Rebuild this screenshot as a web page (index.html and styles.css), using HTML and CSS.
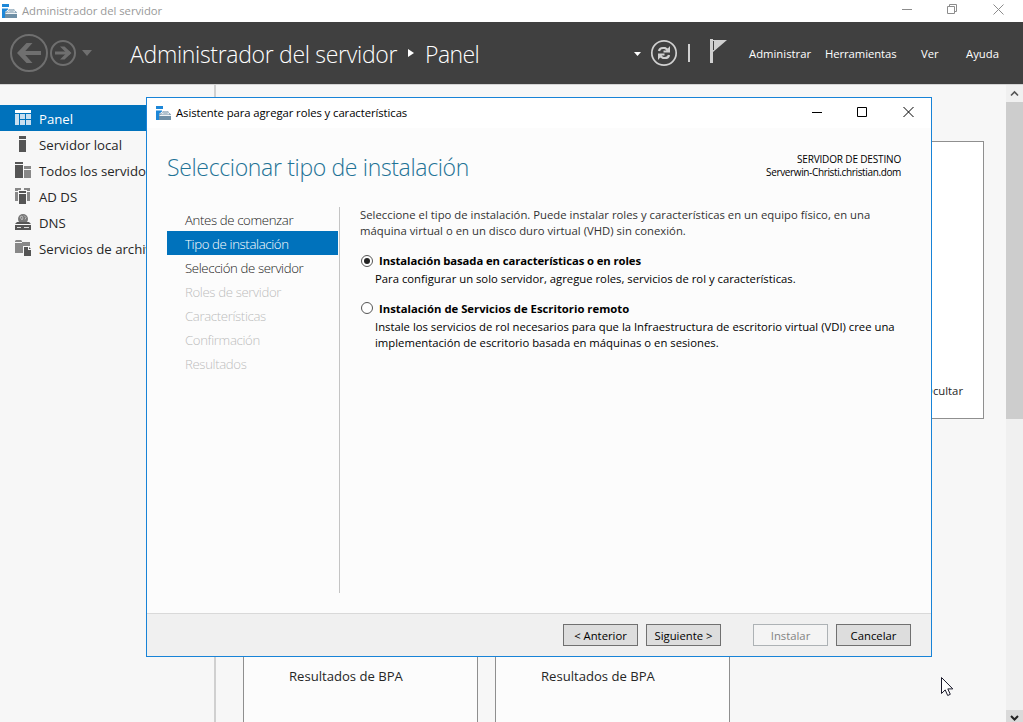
FILE: index.html
```html
<!DOCTYPE html>
<html lang="es">
<head>
<meta charset="utf-8">
<title>Administrador del servidor</title>
<link rel="stylesheet" href="styles.css">
</head>
<body>
<svg class="defs" width="0" height="0" aria-hidden="true">
  <symbol id="app" viewBox="0 0 15 15"><path fill="#1d87d8" d="M0 0h7v3H0zM0 4.500h6v1L3 8v6H0z"/><path fill="#6f8fa5" d="M2.500 9 5 7h1l1-2h5l1 2h.8L15 9v5H3V9z"/><path fill="none" stroke="#fff" stroke-width=".9" d="M6.800 8V6.700L7.600 6h3.800l.8.700V8M3.500 9.500H15M4.500 8h9"/></symbol>
</svg>
<div class="app">
  <header class="titlebar">
    <svg class="appicon" width="15" height="15"><use href="#app"/></svg>
    <span class="titletext">Administrador del servidor</span>
    <svg class="winbtns" width="110" height="20" fill="none" stroke="#8c8c8c"><path d="M1 9.500h10M46.500 6.500h7v7h-7zM48.500 6.500v-2h7v7h-2M92.500 4.500l10 10M102.500 4.500l-10 10"/></svg>
  </header>
  <div class="banner">
    <svg class="navbtns" width="86" height="42" viewBox="0 0 86 42">
      <g fill="none" stroke="#6f6f6f"><circle cx="19" cy="21" r="18" stroke-width="2"/><circle cx="53" cy="21" r="12" stroke-width="2"/>
      <path stroke-width="4" d="M31 21H9"/><path stroke-width="3" d="M60 21H45"/></g>
      <path fill="#6f6f6f" d="M7 21l9.500-10h6l-9 10 9 10h-6zM61.500 21l-7-6.500h-4.500l6.500 6.500-6.500 6.500h4.500zM72 18h10l-5 6z"/>
    </svg>
    <h1 class="crumb"><span class="crumb-a">Administrador del servidor</span><svg width="6" height="8"><path fill="#fff" d="M0 0l6 4-6 4z"/></svg><span class="crumb-b">Panel</span></h1>
    <svg class="tools" width="96" height="42" viewBox="0 0 96 42">
      <path fill="#fff" d="M1 20h7l-3.500 4z"/>
      <circle cx="31" cy="21" r="12.200" fill="none" stroke="#d0d0d0" stroke-width="1.700"/>
      <path fill="none" stroke="#d0d0d0" stroke-width="2.200" d="M26 19q.5-3 4-3h2l2.500 1.700M36 23q-.5 3-4 3h-2l-2.500-1.700"/>
      <path fill="#d0d0d0" d="M37 14v6.500h-6.500v-2h2.500zM25 28v-6.500h6.500v2H29zM55 12h2v18h-2zM77 7h3v24h-3zM80 8h14L80 20z"/><path stroke="#404040" d="M80.500 9v9"/>
    </svg>
    <nav class="menu"><span class="m1">Administrar</span><span class="m2">Herramientas</span><span class="m3">Ver</span><span class="m4">Ayuda</span></nav>
  </div>
  <div class="workspace">
    <aside class="sidebar">
      <div class="item active"><svg width="16" height="16"><path fill="#fff" d="M0 0h16v3H0z"/><path fill="#c9dff0" d="M0 4h4v11H0zM5 4h5v5H5zM11 4h5v5h-5zM5 10h5v5H5zM11 10h5v5h-5z"/></svg><span>Panel</span></div>
      <div class="item"><svg width="16" height="16"><path fill="#555" d="M4 0h7v3H4zM4 4h7v12H4z"/></svg><span>Servidor local</span></div>
      <div class="item"><svg width="16" height="16"><path fill="#555" d="M0 0h8v2H0zM0 3h8v13H0z"/><path fill="#888" d="M9 4h7v3H9zM9 8h7v8H9z"/></svg><span>Todos los servidores</span></div>
      <div class="item"><svg width="16" height="16"><path fill="#888" d="M0 0h6v2H3v1H0zM9 0h6v3h-3V2H9zM0 4h3v9H0zM12 4h3v9h-3z"/><path fill="#555" d="M4 3h7v2H4zM4 6h7v10H4z"/></svg><span>AD DS</span></div>
      <div class="item"><svg width="16" height="16"><circle cx="8" cy="5" r="5" fill="#777"/><path d="M5 3l2-1 1 2-1 2zM9 1.500l2 2-1 2" stroke="#bbb" fill="none"/><path fill="#555" d="M2 8h12l2 2H0zM0 11h16v5H0z"/><path stroke="#ddd" d="M2 13.500h4M9 13.500h5"/></svg><span>DNS</span></div>
      <div class="item"><svg width="16" height="16"><path fill="#888" d="M0 1l1-1h5l1 1v1H0zM0 3h7V2h8v4H8v7H0z"/><path fill="#555" d="M9 7h4v3h3v6H9zM14 7l2 2h-2z"/></svg><span>Servicios de archivos</span></div>
    </aside>
    <main class="content">
      <section class="welcome"><span>Ocultar</span></section>
      <div class="tiles"><section class="tile">Resultados de BPA</section><section class="tile">Resultados de BPA</section></div>
    </main>
    <div class="scroll">
      <svg width="17" height="17"><path d="M5 10.500l3.500-3.500 3.500 3.500" fill="none" stroke="#555" stroke-width="1.600"/></svg>
      <div class="thumb"></div>
      <svg class="down" width="17" height="12"><path d="M5 6l3.500 3.500L12 6" fill="none" stroke="#222" stroke-width="2"/></svg>
    </div>
  </div>
</div>

<div class="dialog">
  <header class="dlg-title">
    <svg class="appicon" width="15" height="15"><use href="#app"/></svg><span>Asistente para agregar roles y características</span>
    <svg class="dlg-btns" width="104" height="12" fill="none" stroke="#000"><path d="M0 6.500h10M45.500 1.500h9v9h-9zM91.500 1l10 10M101.500 1l-10 10"/></svg>
  </header>
  <div class="dlg-head"><h2>Seleccionar tipo de instalación</h2><div class="dest"><div class="d1">SERVIDOR DE DESTINO</div><div class="d2">Serverwin-Christi.christian.dom</div></div></div>
  <div class="dlg-body">
    <ul class="steps"><li>Antes de comenzar</li><li class="current">Tipo de instalación</li><li>Selección de servidor</li><li class="off">Roles de servidor</li><li class="off">Características</li><li class="off">Confirmación</li><li class="off">Resultados</li></ul>
    <div class="pane">
      <p class="intro"><span>Seleccione el tipo de instalación. Puede instalar roles y características en un equipo físico, en una</span><br><span>máquina virtual o en un disco duro virtual (VHD) sin conexión.</span></p>
      <div class="opt first"><i class="radio on"></i><b class="b1">Instalación basada en características o en roles</b></div>
      <p class="desc"><span>Para configurar un solo servidor, agregue roles, servicios de rol y características.</span></p>
      <div class="opt second"><i class="radio"></i><b>Instalación de Servicios de Escritorio remoto</b></div>
      <p class="desc"><span>Instale los servicios de rol necesarios para que la Infraestructura de escritorio virtual (VDI) cree una</span><br><span>implementación de escritorio basada en máquinas o en sesiones.</span></p>
    </div>
  </div>
  <footer class="dlg-foot"><button>&lt; Anterior</button><button>Siguiente &gt;</button><button class="disabled" disabled>Instalar</button><button>Cancelar</button></footer>
</div>
<svg class="cursor" width="13" height="20"><path d="M.5.500v16l3.700-3.600 2.500 5.600 2.600-1.200-2.500-5.400h5z" fill="#fff" stroke="#1a1a2a"/></svg>
</body>
</html>
```
FILE: styles.css
```css
* { box-sizing: border-box; }
body { margin: 0; font-family: "Open Sans", "Noto Sans", sans-serif; font-size: 11.3px; color: #000; overflow: hidden; }
h1, h2, p, ul { margin: 0; padding: 0; font-weight: 300; }
svg { display: block; flex: none; }
span, b, li, button { white-space: nowrap; }
.defs { position: absolute; }
.app { width: 1023px; height: 722px; display: flex; flex-direction: column; background: #f7f7f7; overflow: hidden; }
.titlebar { height: 22px; background: #fff; display: flex; align-items: center; padding: 0 14px 0 2px; color: #999; flex: none; }
.titletext { margin-left: 5px; flex: 1; padding-bottom: 2px; letter-spacing: -.03px; }
.winbtns { margin: -2px -2px 0 0; }
.banner { height: 63px; background: #404040; border-bottom: 1px solid #d4d4d4; color: #fff; display: flex; align-items: center; padding-left: 10px; flex: none; }
.crumb { display: flex; align-items: center; margin-left: 34px; font-size: 23px; line-height: 30px; width: 503px; margin-top: 2px; }
.crumb svg { margin: -2px 11px 0; }
.crumb-a { letter-spacing: -.31px; }
.crumb-b { letter-spacing: -.6px; }
.menu { display: flex; margin-left: 20px; }
.m1 { width: 76px; }
.m2 { width: 96px; letter-spacing: -.08px; }
.m3 { width: 45px; }
.workspace { flex: 1; display: flex; min-height: 0; }
.sidebar { width: 216px; border-right: 2px solid #d0d0d0; padding-top: 20px; flex: none; }
.item { height: 26px; display: flex; align-items: center; padding-left: 15px; gap: 8px; font-size: 13.2px; color: #262626; }
.item span { padding-top: 2px; }
.item.active { background: #0072bc; color: #fff; }
.content { flex: 1; padding: 56px 22px 0 27px; }
.welcome { height: 278px; border: 1px solid #8f8f8f; background: #fff; display: flex; align-items: flex-end; justify-content: flex-end; padding: 0 20px 20px; color: #262626; }
.tiles { display: flex; gap: 17px; margin-top: 60px; }
.tile { width: 235px; height: 300px; border: 1px solid #8f8f8f; background: #fcfcfc; padding: 186px 0 0 45px; font-size: 13.1px; line-height: 20px; color: #262626; }
.scroll { width: 17px; background: #f0f0f0; display: flex; flex-direction: column; }
.thumb { height: 317px; background: #cdcdcd; }
.down { margin-top: auto; background: #dadada; }
.dialog { position: absolute; left: 146px; top: 97px; width: 786px; height: 560px; border: 1px solid #1883d7; background: #fcfcfc; display: flex; flex-direction: column; }
.dlg-title { height: 30px; background: #fff; display: flex; align-items: center; padding-left: 9px; flex: none; }
.dlg-title span { margin-left: 5px; flex: 1; padding-bottom: 2px; letter-spacing: -.07px; }
.dlg-btns { margin-right: 15px; margin-top: -2px; }
.dlg-head { height: 79px; display: flex; justify-content: space-between; padding: 22px 30px 0 20px; flex: none; }
h2 { font-size: 23px; line-height: 34px; color: #1f7396; letter-spacing: -.34px; }
.dest { text-align: right; font-size: 10px; line-height: 13px; padding-top: 3px; }
.d1 { letter-spacing: -.16px; }
.d2 { letter-spacing: -.36px; }
.dlg-body { flex: 1; display: flex; }
.steps { list-style: none; width: 193px; height: 386px; border-right: 1px solid #c4c4c4; padding: 0 1px 0 20px; flex: none; font-size: 13.2px; letter-spacing: -.36px; line-height: 24px; color: #222; }
.steps li { height: 24px; padding: 1px 0 0 18px; }
.steps .current { background: #0072bc; color: #fff; }
.steps .off { color: #bdbdbd; }
.pane { padding-left: 20px; line-height: 16px; }
.pane p { font-weight: 400; }
.intro { color: #333; letter-spacing: .015px; }
.opt { display: flex; align-items: center; gap: 6px; height: 18px; padding-left: 1px; }
.first { margin-top: 13px; }
.b1 { letter-spacing: -.09px; }
.second { margin-top: 12px; }
.second b { padding-top: 2px; }
.second + .desc { padding-top: 2px; }
.radio { width: 12px; height: 12px; border: 1px solid #555; border-radius: 50%; background: #fff; padding: 2px; }
.on::before { content: ""; display: block; width: 6px; height: 6px; border-radius: 50%; background: #222; }
.desc { padding: 1px 0 0 15px; }
.dlg-foot { height: 43px; border-top: 1px solid #d9d9d9; background: #f0f0f0; display: flex; align-items: center; justify-content: flex-end; gap: 8px; padding-right: 20px; flex: none; }
button { width: 75px; height: 22px; padding: 0; border: 1px solid #707070; background: #ddd; font: inherit; color: #000; }
.disabled { margin-left: 24px; border-color: #adb2b5; background: #f4f4f4; color: #838383; }
.cursor { position: absolute; left: 941px; top: 677px; }
```
